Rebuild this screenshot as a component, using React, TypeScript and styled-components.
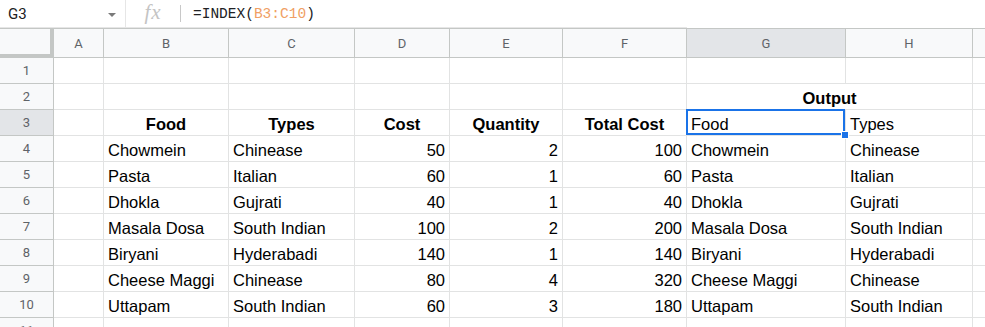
import styled, { createGlobalStyle } from "styled-components";

const GlobalStyle = createGlobalStyle`
  html, body {
    margin: 0;
    padding: 0;
    background: #ffffff;
    overflow: hidden;
  }
  * {
    box-sizing: border-box;
  }
`;

// the last column (I) runs past the window edge, so its letter is not shown
const COLS = [54, 50, 125, 126, 95, 113, 124, 159, 127, 100];
const LETTERS = ["A", "B", "C", "D", "E", "F", "G", "H", ""];

type Align = "left" | "center" | "right";

const Page = styled.div`
  width: 985px;
  height: 327px;
  overflow: hidden;
  font-family: "Liberation Sans", Arial, sans-serif;
  color: #000000;
`;

const FormulaBar = styled.div`
  height: 28px;
  display: flex;
  align-items: center;
  border-bottom: 1px solid #e6e6e6;
  width: 687px;
`;

const NameBox = styled.div`
  width: 126px;
  height: 28px;
  display: flex;
  align-items: center;
  justify-content: space-between;
  padding: 0 9px 0 8px;
  border-right: 1px solid #e6e6e6;
  font-family: Roboto, "Liberation Sans", sans-serif;
  font-size: 15px;
  color: #202124;
`;

const Caret = styled.span`
  width: 0;
  height: 0;
  border-left: 4px solid transparent;
  border-right: 4px solid transparent;
  border-top: 4px solid #7a7a7a;
  margin-top: 2px;
`;

const FxLabel = styled.div`
  width: 54px;
  display: flex;
  align-items: center;
  justify-content: center;
  font-family: "Liberation Serif", "Times New Roman", serif;
  font-style: italic;
  font-size: 21px;
  color: #c4c4c4;
  letter-spacing: 1px;
  margin-top: -3px;
`;

const Divider = styled.div`
  width: 1px;
  height: 17px;
  background: #c8c8c8;
`;

const Formula = styled.div`
  padding-left: 12px;
  font-family: "Liberation Mono", "DejaVu Sans Mono", monospace;
  font-size: 14.5px;
  color: #202124;
`;

const RangeRef = styled.span`
  color: #f0a064;
`;

const Grid = styled.div`
  display: grid;
  grid-template-columns: ${COLS.map((c) => `${c}px`).join(" ")};
  grid-auto-rows: 26px;
  grid-template-rows: 30px;
  width: ${COLS.reduce((a, b) => a + b, 0)}px;
`;

const Corner = styled.div`
  background: #f8f9fa;
  border-top: 1px solid #c4c7c5;
  border-right: 4px solid #c4c7c5;
  border-bottom: 4px solid #c4c7c5;
`;

const ColHeader = styled.div<{ $active?: boolean }>`
  background: ${(p) => (p.$active ? "#e3e5e8" : "#f8f9fa")};
  border-top: 1px solid #c4c7c5;
  border-right: 1px solid #c4c7c5;
  border-bottom: 1px solid #c4c7c5;
  display: flex;
  align-items: center;
  justify-content: center;
  font-family: Roboto, "Liberation Sans", sans-serif;
  font-size: 13px;
  color: #5f6368;
`;

const RowHeader = styled.div<{ $active?: boolean }>`
  background: ${(p) => (p.$active ? "#e3e5e8" : "#f8f9fa")};
  border-right: 1px solid #c4c7c5;
  border-bottom: 1px solid #c4c7c5;
  display: flex;
  align-items: center;
  justify-content: center;
  font-family: Roboto, "Liberation Sans", sans-serif;
  font-size: 13px;
  color: #5f6368;
`;

const Cell = styled.div<{ $align?: Align; $bold?: boolean; $span?: number }>`
  position: relative;
  grid-column: ${(p) => (p.$span ? `span ${p.$span}` : "auto")};
  border-right: 1px solid #e2e3e3;
  border-bottom: 1px solid #e2e3e3;
  display: flex;
  align-items: flex-end;
  justify-content: ${(p) =>
    p.$align === "right" ? "flex-end" : p.$align === "center" ? "center" : "flex-start"};
  padding: 0 4px 1px 4px;
  font-size: 16.5px;
  font-weight: ${(p) => (p.$bold ? 700 : 400)};
  white-space: nowrap;
  overflow: hidden;
  line-height: 19px;
`;

const Selection = styled.div`
  position: absolute;
  left: -1px;
  top: -1px;
  right: 0;
  bottom: 0;
  border: 2px solid #1a73e8;
  pointer-events: none;
`;

const Handle = styled.div`
  position: absolute;
  right: -4px;
  bottom: -4px;
  width: 8px;
  height: 8px;
  background: #1a73e8;
  border: 1px solid #ffffff;
  z-index: 2;
`;

const SelectedWrap = styled(Cell)`
  overflow: visible;
  z-index: 1;
`;

const data: [string, string, number, number, number][] = [
  ["Chowmein", "Chinease", 50, 2, 100],
  ["Pasta", "Italian", 60, 1, 60],
  ["Dhokla", "Gujrati", 40, 1, 40],
  ["Masala Dosa", "South Indian", 100, 2, 200],
  ["Biryani", "Hyderabadi", 140, 1, 140],
  ["Cheese Maggi", "Chinease", 80, 4, 320],
  ["Uttapam", "South Indian", 60, 3, 180],
];

const EmptyRow = ({ n }: { n: number }) => (
  <>
    <RowHeader>{n}</RowHeader>
    {LETTERS.map((l, i) => (
      <Cell key={i} />
    ))}
  </>
);

export default function App() {
  return (
    <Page>
      <GlobalStyle />
      <FormulaBar>
        <NameBox>
          G3
          <Caret />
        </NameBox>
        <FxLabel>fx</FxLabel>
        <Divider />
        <Formula>
          =INDEX(<RangeRef>B3:C10</RangeRef>)
        </Formula>
      </FormulaBar>
      <Grid>
        <Corner />
        {LETTERS.map((l, i) => (
          <ColHeader key={i} $active={l === "G"}>
            {l}
          </ColHeader>
        ))}

        <EmptyRow n={1} />

        <RowHeader>2</RowHeader>
        {["A", "B", "C", "D", "E", "F"].map((l) => (
          <Cell key={l} />
        ))}
        <Cell $span={2} $align="center" $bold>
          Output
        </Cell>
        <Cell />

        <RowHeader $active>3</RowHeader>
        <Cell />
        <Cell $align="center" $bold>Food</Cell>
        <Cell $align="center" $bold>Types</Cell>
        <Cell $align="center" $bold>Cost</Cell>
        <Cell $align="center" $bold>Quantity</Cell>
        <Cell $align="center" $bold>Total Cost</Cell>
        <SelectedWrap>
          Food
          <Selection />
          <Handle />
        </SelectedWrap>
        <Cell>Types</Cell>
        <Cell />

        {data.map(([food, type, cost, qty, total], i) => (
          <>
            <RowHeader key={`r${i}`}>{i + 4}</RowHeader>
            <Cell />
            <Cell>{food}</Cell>
            <Cell>{type}</Cell>
            <Cell $align="right">{cost}</Cell>
            <Cell $align="right">{qty}</Cell>
            <Cell $align="right">{total}</Cell>
            <Cell>{food}</Cell>
            <Cell>{type}</Cell>
            <Cell />
          </>
        ))}

        <EmptyRow n={11} />
      </Grid>
    </Page>
  );
}
